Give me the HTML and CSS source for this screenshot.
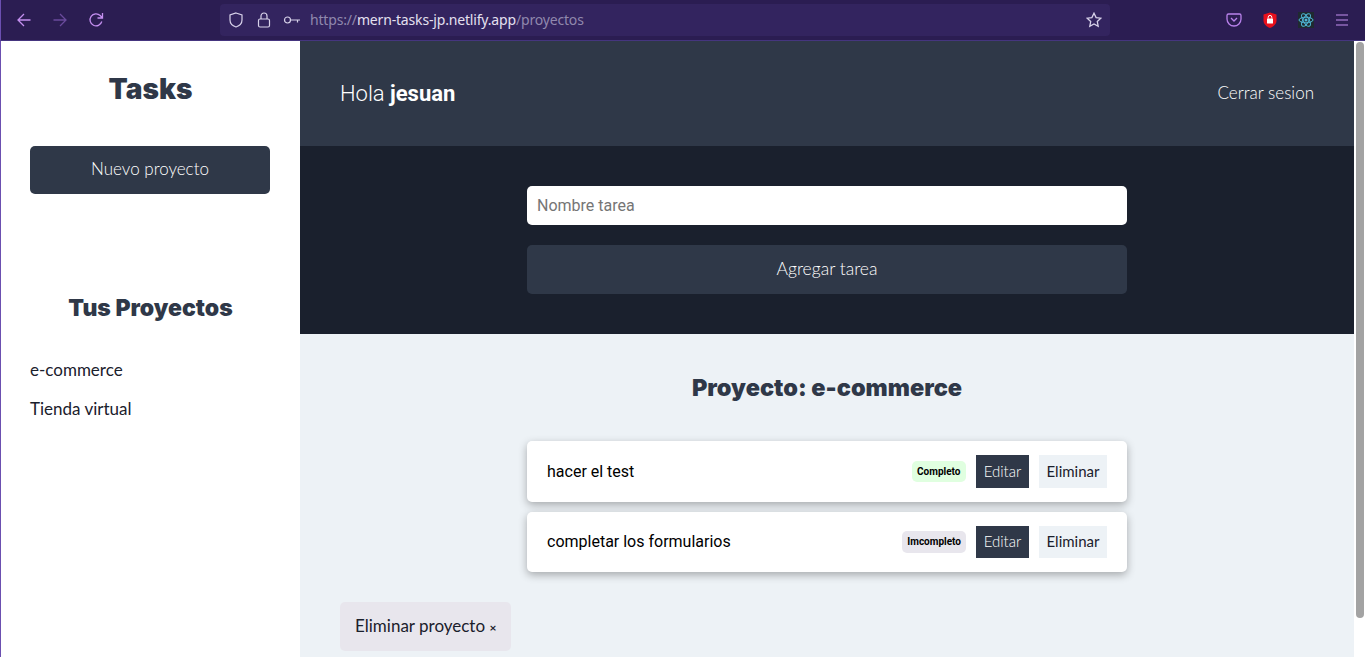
FILE: index.html
```html
<!DOCTYPE html>
<html lang="es">
<head>
    <meta charset="UTF-8">
    <title>Tasks</title>
    <link rel="stylesheet" href="styles.css">
</head>
<body>
    <div class="toolbar">
        <div class="nav-icons">
            <svg class="icon" viewBox="0 0 16 16"><path d="M14.5 8H2M8 2L2 8l6 6" /></svg>
            <svg class="icon icon-off" viewBox="0 0 16 16"><path d="M1.5 8H14M8 2l6 6-6 6" /></svg>
            <svg class="icon" viewBox="0 0 16 16"><path d="M13.8 9.500A6 6 0 1 1 12.200 3.500L14.500 6M14.500 1v5H9.500" /></svg>
        </div>
        <div class="urlbar">
            <svg class="url-icon" viewBox="0 0 16 16"><path d="M8 1l6 2v5c0 3.500-3 6-6 7-3-1-6-3.500-6-7V3z" /></svg>
            <svg class="url-icon" viewBox="0 0 16 16"><rect x="2.500" y="7" width="11" height="8" rx="1.500" /><path d="M5 7V4a3 3 0 0 1 6 0v3" /></svg>
            <svg class="url-icon key" viewBox="0 0 18 16"><circle cx="4.500" cy="8" r="3" /><path d="M7.500 8H17M14.500 8v2.500" /></svg>
            <div class="url-text">https://<span class="url-host">mern-tasks-jp.netlify.app</span>/proyectos</div>
            <svg class="url-icon star" viewBox="0 0 16 16"><path d="M8 1.200l2.100 4.400 4.700.6-3.500 3.300.9 4.800L8 12l-4.200 2.300.9-4.800L1.200 6.200l4.700-.6z" /></svg>
        </div>
        <div class="ext-icons">
            <svg class="ext pocket" viewBox="0 0 16 16"><path d="M2.500 2h11A1.500 1.500 0 0 1 15 3.500V7a7 7 0 0 1-14 0V3.500A1.500 1.500 0 0 1 2.500 2zM5 6l3 3 3-3" /></svg>
            <svg class="ext" viewBox="0 0 16 16"><path d="M8 .5l6.500 2v6c0 3.500-3 6-6.500 7.500C4.500 14.500 1.500 12 1.500 8.500v-6z" fill="#e8101c" /><rect x="5" y="6.500" width="6" height="5" rx=".5" fill="#fff" /><path d="M6.200 6.500V5.200a1.800 1.800 0 0 1 3.600 0v1.300" fill="none" stroke="#fff" /></svg>
            <svg class="ext" viewBox="0 0 16 16"><rect width="16" height="16" fill="#1f2a30" /><g fill="none" stroke="#4fb6d6" stroke-width="1"><ellipse cx="8" cy="8" rx="7" ry="2.800" /><ellipse cx="8" cy="8" rx="7" ry="2.800" transform="rotate(60 8 8)" /><ellipse cx="8" cy="8" rx="7" ry="2.800" transform="rotate(120 8 8)" /></g><circle cx="8" cy="8" r="1.500" fill="#4fb6d6" /></svg>
            <svg class="ext menu" viewBox="0 0 16 16"><path d="M2 3h12M2 8h12M2 13h12" /></svg>
        </div>
    </div>

    <div class="page">
        <aside class="sidebar">
            <h1 class="logo">Tasks</h1>
            <button class="btn-new">Nuevo proyecto</button>
            <h2 class="side-title">Tus Proyectos</h2>
            <ul class="project-list">
                <li>e-commerce</li>
                <li>Tienda virtual</li>
            </ul>
        </aside>

        <main class="main">
            <header class="topbar">
                <p class="hello">Hola <b>jesuan</b></p>
                <span class="logout">Cerrar sesion</span>
            </header>

            <section class="task-form">
                <div class="task-input">Nombre tarea</div>
                <button class="btn-add">Agregar tarea</button>
            </section>

            <section class="content">
                <h2 class="project-title">Proyecto: e-commerce</h2>
                <ul class="task-list">
                    <li class="task">
                        <span class="task-name">hacer el test</span>
                        <div class="task-actions">
                            <span class="state done">Completo</span>
                            <button class="btn-edit">Editar</button>
                            <button class="btn-del">Eliminar</button>
                        </div>
                    </li>
                    <li class="task">
                        <span class="task-name">completar los formularios</span>
                        <div class="task-actions">
                            <span class="state pending">Imcompleto</span>
                            <button class="btn-edit">Editar</button>
                            <button class="btn-del">Eliminar</button>
                        </div>
                    </li>
                </ul>
                <button class="btn-remove">Eliminar proyecto <small>×</small></button>
            </section>
        </main>

        <div class="scrollbar"><div class="thumb"></div></div>
    </div>
</body>
</html>
```
FILE: styles.css
```css
* {
    box-sizing: border-box;
}
html, body {
    height: 100%;
}
body {
    margin: 0;
    overflow: hidden;
    font-family: Lato, "Open Sans", sans-serif;
    background-color: #fff;
    color: #1a202c;
}
button {
    border: none;
    font-family: inherit;
    cursor: pointer;
}

/* browser chrome */
.toolbar {
    height: 41px;
    display: flex;
    align-items: center;
    background-color: #2b1d52;
    border-bottom: 1px solid #45357f;
    border-left: 1px solid #6b4fb0;
}
.nav-icons {
    width: 219px;
    display: flex;
    gap: 20px;
    padding-left: 15px;
}
.icon {
    width: 16px;
    height: 16px;
    fill: none;
    stroke: #c48ff0;
    stroke-width: 1.300;
}
.icon-off {
    stroke: #6a4a9c;
}
.urlbar {
    width: 890px;
    height: 32px;
    display: flex;
    align-items: center;
    background-color: #33245f;
    border-radius: 4px;
    padding: 0 8px;
    margin-bottom: 1px;
}
.url-icon {
    width: 16px;
    height: 16px;
    margin-right: 12px;
    fill: none;
    stroke: #d8d2ea;
    stroke-width: 1.200;
}
.url-icon.key {
    width: 18px;
    margin-right: 9px;
    margin-left: -1px;
}
.url-icon.star {
    margin: 0 0 0 auto;
    stroke-width: 1.300;
}
.url-text {
    font-family: "Noto Sans", sans-serif;
    font-size: 14px;
    letter-spacing: -0.17px;
    color: #9088ad;
}
.url-host {
    color: #e4e0f0;
}
.ext-icons {
    display: flex;
    align-items: center;
    gap: 20px;
    margin-left: 116px;
}
.ext {
    width: 16px;
    height: 16px;
}
.pocket {
    fill: none;
    stroke: #b982ec;
    stroke-width: 1.300;
}
.menu {
    fill: none;
    stroke: #c48ff0;
    stroke-width: 1.200;
}

/* page */
.page {
    height: 616px;
    display: flex;
    overflow: hidden;
}
.sidebar {
    width: 300px;
    flex-shrink: 0;
    background-color: #fff;
    border-left: 1px solid #6b4fb0;
    padding: 0 29px;
}
.logo {
    margin: 28px 0 37px;
    font-family: Inter, sans-serif;
    font-size: 28px;
    line-height: 40px;
    font-weight: 900;
    color: #2f3848;
    text-align: center;
}
.btn-new {
    width: 240px;
    height: 48px;
    display: block;
    padding-bottom: 4px;
    background-color: #2f3848;
    border-radius: 5px;
    color: #fff;
    font-size: 17px;
    font-weight: 300;
}
.side-title {
    margin: 96px 0 24px;
    font-family: Inter, sans-serif;
    font-size: 23px;
    line-height: 36px;
    font-weight: 900;
    color: #2f3848;
    text-align: center;
}
.project-list {
    list-style: none;
    margin: 0;
    padding: 0;
}
.project-list li {
    height: 39px;
    line-height: 39px;
    font-size: 17px;
}

.main {
    flex: 1;
    min-width: 0;
    display: flex;
    flex-direction: column;
}
.topbar {
    height: 105px;
    flex-shrink: 0;
    display: flex;
    align-items: center;
    justify-content: space-between;
    padding: 0 40px;
    background-color: #2f3848;
    color: #fff;
}
.hello {
    margin: 0;
    font-size: 22px;
    font-family: Roboto, sans-serif;
    font-weight: 300;
}
.hello b {
    font-weight: 700;
}
.logout {
    font-size: 17px;
    font-weight: 300;
    padding-bottom: 2px;
}
.task-form {
    height: 188px;
    flex-shrink: 0;
    padding-top: 40px;
    background-color: #1a202d;
}
.task-input {
    width: 600px;
    height: 39px;
    margin: 0 auto 20px;
    padding-left: 10px;
    line-height: 39px;
    background-color: #fff;
    border-radius: 5px;
    font-family: Roboto, sans-serif;
    font-size: 16px;
    color: #757575;
}
.btn-add {
    width: 600px;
    height: 49px;
    display: block;
    margin: 0 auto;
    padding-bottom: 4px;
    background-color: #2f3848;
    border-radius: 5px;
    color: #fff;
    font-size: 17.500px;
    font-weight: 300;
}
.content {
    flex: 1;
    padding: 0 40px;
    background-color: #edf2f6;
}
.project-title {
    margin: 36px 0 35px;
    font-family: Inter, sans-serif;
    font-size: 23.500px;
    line-height: 36px;
    font-weight: 900;
    color: #2f3848;
    text-align: center;
}
.task-list {
    list-style: none;
    width: 600px;
    margin: 0 auto;
    padding: 0;
}
.task {
    height: 61px;
    margin-bottom: 10px;
    display: flex;
    align-items: center;
    justify-content: space-between;
    padding: 0 20px;
    background-color: #fff;
    border-radius: 5px;
    box-shadow: 0 3px 8px rgba(0, 0, 0, 0.3);
}
.task + .task {
    height: 60px;
}
.task + .task .task-name {
    margin-bottom: 2px;
}
.task-name {
    font-family: Roboto, sans-serif;
    font-size: 16px;
    color: #000;
}
.task-actions {
    display: flex;
    align-items: center;
}
.state {
    height: 21px;
    padding: 0 5px;
    line-height: 21px;
    border-radius: 5px;
    font-family: Roboto, sans-serif;
    font-size: 10px;
    font-weight: 700;
    color: #000;
}
.done {
    background-color: #e0ffe0;
    padding: 0 5.500px;
}
.pending {
    height: 22px;
    background-color: #e8e6ed;
}
.btn-edit, .btn-del {
    height: 33px;
    padding: 0 0 2px;
    font-size: 15px;
}
.task + .task .btn-edit, .task + .task .btn-del {
    height: 32px;
}
.btn-edit {
    width: 53px;
    margin-left: 10px;
    background-color: #2f3848;
    color: #fff;
    font-weight: 300;
}
.btn-del {
    width: 68px;
    margin-left: 10px;
    background-color: #edf2f6;
    color: #1a202c;
    font-weight: 400;
}
.btn-remove {
    display: block;
    height: 49px;
    margin-top: 30px;
    padding: 0 15px 2px;
    background-color: #e8e6ed;
    border-radius: 5px;
    color: #1a202c;
    font-size: 17px;
    font-weight: 400;
}
.btn-remove small {
    font-size: 12px;
    font-weight: 700;
}

.scrollbar {
    width: 11px;
    flex-shrink: 0;
    padding: 1px 1px 0 2px;
    background-color: #fff;
}
.thumb {
    height: 576px;
    background-color: #a3a3a3;
    border-radius: 4px;
}
```
